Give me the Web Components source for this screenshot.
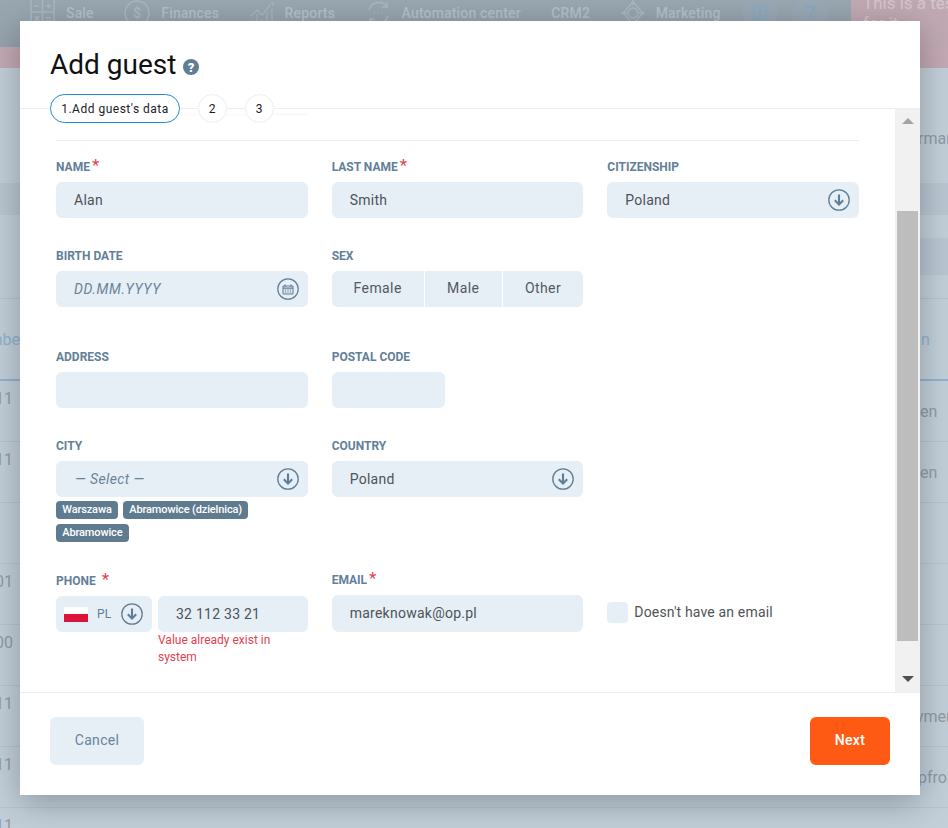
<!DOCTYPE html>
<html lang="en">
<head>
<meta charset="utf-8">
<title>Add guest</title>
<style>
  html, body { margin: 0; height: 100%; }
  body { font-family: Roboto, "Liberation Sans", sans-serif; overflow: hidden; background: #c2cfd9; }
  .row { display: grid; grid-template-columns: repeat(3, 1fr); column-gap: 24px; align-items: start; }
  .tags { display: flex; flex-wrap: wrap; gap: 5px; margin-top: 4px; }
  .phone { display: flex; gap: 6px; align-items: flex-start; }
  .phone x-select { width: 96px; flex: none; }
  .phone > div { flex: 1; min-width: 0; }
  .error { color: #e2434f; font-size: 12px; line-height: 17px; }
  .no-email { padding-top: 30px; }
  .email { margin-top: -1px; }
  .flag { display: block; width: 24px; height: 15px; margin-right: 9px; background: linear-gradient(#fff 50%, #dc143c 50%); }
  .code { color: #5c809a; font-size: 12px; letter-spacing: .3px; }
  .footer { display: flex; justify-content: space-between; }
</style>
</head>
<body>
<x-backdrop></x-backdrop>

<x-modal>
  <span slot="title">Add guest</span>
  <x-stepper slot="stepper" steps="1.Add guest's data,2,3"></x-stepper>

  <div class="row" style="margin-top:0">
    <x-field label="Name" required><x-input value="Alan"></x-input></x-field>
    <x-field label="Last name" required><x-input value="Smith"></x-input></x-field>
    <x-field label="Citizenship"><x-select value="Poland"></x-select></x-field>
  </div>

  <div class="row" style="margin-top:29px">
    <x-field label="Birth date"><x-input placeholder="DD.MM.YYYY" icon="calendar"></x-input></x-field>
    <x-field label="Sex"><x-segment options="Female,Male,Other"></x-segment></x-field>
  </div>

  <div class="row" style="margin-top:41px">
    <x-field label="Address"><x-input></x-input></x-field>
    <x-field label="Postal code"><x-input style="width:113px"></x-input></x-field>
  </div>

  <div class="row" style="margin-top:29px">
    <x-field label="City">
      <x-select placeholder="— Select —"></x-select>
      <div class="tags">
        <x-tag>Warszawa</x-tag>
        <x-tag>Abramowice (dzielnica)</x-tag>
        <x-tag>Abramowice</x-tag>
      </div>
    </x-field>
    <x-field label="Country"><x-select value="Poland"></x-select></x-field>
  </div>

  <div class="row" style="margin-top:30px">
    <x-field label="Phone" required wide-star>
      <div class="phone">
        <x-select compact>
          <i class="flag"></i><span class="code">PL</span>
        </x-select>
        <div>
          <x-input value="32 112 33 21"></x-input>
          <div class="error">Value already exist in system</div>
        </div>
      </div>
    </x-field>
    <x-field class="email" label="Email" required><x-input value="mareknowak@op.pl" underline></x-input></x-field>
    <div class="no-email"><x-checkbox>Doesn't have an email</x-checkbox></div>
  </div>

  <div slot="footer" class="footer">
    <x-button>Cancel</x-button>
    <x-button primary>Next</x-button>
  </div>
</x-modal>

<script>
// Small icons shared by the form controls
const ICONS = {
  arrow: `<svg width="22" height="22" viewBox="0 0 22 22" fill="none"><circle cx="11" cy="11" r="10.2" stroke="#5f7d95" stroke-width="1.3"/><path d="M11 5.5v10M6.8 11.2l4.2 4.4 4.2-4.4" stroke="#5f7d95" stroke-width="2.1"/></svg>`,
  calendar: `<svg width="22" height="22" viewBox="0 0 22 22" fill="none"><circle cx="11" cy="11" r="10.2" stroke="#5f7d95" stroke-width="1.2"/><path d="M6 8h10v8H6z" stroke="#5f7d95"/><path d="M6 10.2h10M8 6.4v2M14 6.4v2" stroke="#5f7d95" stroke-width="1.2"/><path d="M7.8 12h1.4M10.3 12h1.4M12.8 12h1.4M7.8 14h1.4M10.3 14h1.4M12.8 14h1.4" stroke="#5f7d95"/></svg>`,
};

// Page behind the dialog
const NAV = [
  ['Sale', `<svg width="25" height="30" viewBox="0 0 25 30" fill="none" stroke="#aab8c1" stroke-width="1.5"><rect x="1" y="1" width="23" height="26"/><path d="M12.5 1v26M1 14h23M4 8h5M16 8h5M18.5 5.5v5M5 18l4 5M9 18l-4 5M16 20h5M16 23h5"/></svg>`],
  ['Finances', `<svg width="26" height="28" viewBox="0 0 26 28" fill="none" stroke="#aab8c1" stroke-width="1.5"><circle cx="13" cy="14" r="12"/><text x="13" y="19" text-anchor="middle" font-family="Roboto" font-size="14" font-weight="700" fill="#aab8c1" stroke="none">$</text></svg>`],
  ['Reports', `<svg width="24" height="24" viewBox="0 0 24 24" fill="none" stroke="#aab8c1" stroke-width="1.2"><path d="M1 15l6-6 5 5 8-10M20 2h3v3M2 23v-4M7 23V13M12 23v-5M17 23V11M22 23V8"/></svg>`],
  ['Automation center', `<svg width="25" height="28" viewBox="0 0 25 28" fill="none" stroke="#aab8c1" stroke-width="1.5"><path d="M3 11A10 10 0 0 1 21 8M22 17A10 10 0 0 1 4 20M21 3v5h-5M4 25v-5h5"/><path d="M8 14h1M12 14h1M16 14h1"/></svg>`],
  ['CRM2', ''],
  ['Marketing', `<svg width="24" height="28" viewBox="0 0 24 28" fill="none" stroke="#aab8c1" stroke-width="1.5"><circle cx="12" cy="14" r="5"/><path d="M12 3l10 11-10 11L2 14zM12 0v6M12 22v6M0 14h6M18 14h6"/></svg>`],
];

const backdropTemplate = document.createElement('template');
backdropTemplate.innerHTML = /*html*/ `
  <style>
    :host { display: block; height: 828px; overflow: hidden; color: #8f9ba5; background: #c2cfd9; font-size: 16px; }
    nav { display: flex; gap: 30.5px; height: 47px; padding-left: 30px; background: linear-gradient(#99a7b1, #95a3ad); overflow: hidden; }
    .item { display: flex; align-items: center; gap: 11px; height: 26px; color: #b3c1ca; font-size: 14px; font-weight: 500; letter-spacing: .17px; white-space: nowrap; }
    .item svg { flex: none; }
    .round { flex: none; width: 36px; height: 36px; margin-top: -4px; border-radius: 50%; background: #9aa8b5; color: #84a9c8; display: flex; align-items: center; justify-content: center; font-size: 24px; }
    .round.first { margin-left: -9px; margin-right: -17px; }
    .notice { flex: 1; min-width: 0; margin-left: -7px; padding-left: 12px; background: #c0a9b3; color: #d6c6cc; font-size: 17px; line-height: 20px; height: 68px; overflow: hidden; white-space: nowrap; }
    .notice span { display: block; }
    .notice span:first-child { margin-top: -7px; }
    .pink { height: 21px; background: #c3a9b4; }
    .plain { height: 115px; display: flex; justify-content: flex-end; align-items: flex-end; }
    .dark { height: 32px; background: #b9c6d1; }
    .gap { height: 23px; }
    .dark2 { height: 37px; background: linear-gradient(90deg, transparent 50%, #b9c6d1 50%); }
    .gap2 { height: 24px; border-bottom: 1px solid #b5c2cc; box-sizing: border-box; }
    .line { display: flex; justify-content: space-between; align-items: center; height: 61px; box-sizing: border-box; border-bottom: 1px solid #b7c4ce; }
    .line.head { height: 82px; border-bottom: 2px solid #90b3d2; color: #8fb2d2; }
    .l { width: 13px; display: flex; justify-content: flex-end; overflow: hidden; white-space: nowrap; }
    .rows .l { align-self: flex-start; margin-top: 8px; line-height: 20px; }
    .r { overflow: hidden; white-space: nowrap; }
    .l b { font-weight: 400; color: #8ea6c6; }
  </style>
  <nav></nav>
  <div class="pink"></div>
  <div class="plain"><span class="r" style="margin-bottom:35px;width:30px">rman</span></div>
  <div class="dark"></div>
  <div class="gap"></div>
  <div class="dark2"></div>
  <div class="gap2"></div>
  <div class="line head"><span class="l" style="width:20px">Numbe</span><span class="r" style="width:27px">n</span></div>
  <div class="rows"></div>
`;

class XBackdrop extends HTMLElement {
  constructor() {
    super();
    this.attachShadow({ mode: 'open' });
    this.shadowRoot.appendChild(backdropTemplate.content.cloneNode(true));
  }

  connectedCallback() {
    const nav = this.shadowRoot.querySelector('nav');
    nav.innerHTML = NAV.map(([name, icon]) => `<div class="item">${icon}<span>${name}</span></div>`).join('')
      + `<div class="round first"><svg width="20" height="22" viewBox="0 0 20 22" fill="none" stroke="#84a9c8" stroke-width="1.3"><path d="M4 1v20M10 1v20M16 1v20M1 15h6M7 7h6M13 13h6"/></svg></div><div class="round">?</div><div class="notice"><span>This is a test message</span><span>for it</span></div>`;

    const rows = [['<b>2</b>11', 'en', 28], ['<b>2</b>11', 'en', 28], ['', '', 28], ['<b>2</b>01', '', 28], ['<b>2</b>00', '', 28], ['<b>2</b>11', 'ymen', 32], ['<b>2</b>11', 'pfrom', 30], ['<b>2</b>11', '', 28]];
    this.shadowRoot.querySelector('.rows').innerHTML = rows
      .map(([l, r, w]) => `<div class="line"><span class="l">${l}</span><span class="r" style="width:${w}px">${r}</span></div>`)
      .join('');
  }
}
customElements.define('x-backdrop', XBackdrop);

const modalTemplate = document.createElement('template');
modalTemplate.innerHTML = /*html*/ `
  <style>
    :host {
      position: absolute; left: 20px; top: 21px; width: 900px; height: 774px;
      display: flex; flex-direction: column; background: #fff;
      box-shadow: 0 8px 32px rgba(0, 0, 0, .28);
    }
    header { height: 88px; box-sizing: border-box; padding: 27px 30px 0; border-bottom: 1px solid #e6eff6; }
    h1 { display: flex; align-items: center; gap: 7px; margin: 0; height: 34px; font-size: 28px; font-weight: 400; color: #111; line-height: 34px; }
    h1 svg { margin-top: 4px; }
    .stepper { display: block; margin-top: 12px; position: relative; }
    .body { flex: 1; display: flex; min-height: 0; }
    .content { flex: 1; padding: 4px 36px 0 36px; min-width: 0; }
    .shade { width: 251px; height: 3px; background: linear-gradient(90deg, #fff 30%, #f8fafc); }
    .rule { margin: 24px 0 17px; border-top: 1px solid #e6eff6; }
    .bar { flex: none; width: 25px; background: #f1f1f1; display: flex; flex-direction: column; align-items: center; padding-top: 9px; box-sizing: border-box; }
    .up { width: 0; height: 0; border: 6px solid transparent; border-top: 0; border-bottom: 6px solid #a3a3a3; }
    .thumb { width: 21px; height: 430px; margin-top: 87px; background: #bdbdbd; }
    .down { width: 0; height: 0; margin-top: 35px; border: 6px solid transparent; border-bottom: 0; border-top: 6px solid #505050; }
    footer { height: 103px; box-sizing: border-box; border-top: 1px solid #e6eff6; padding: 24px 30px 0; }
  </style>
  <header>
    <h1>
      <slot name="title"></slot>
      <svg width="16" height="16" viewBox="0 0 16 16"><circle cx="8" cy="8" r="8" fill="#5f7d95"/><text x="8" y="12.6" text-anchor="middle" font-family="Roboto" font-size="13" font-weight="900" fill="#fff">?</text></svg>
    </h1>
    <div class="stepper"><slot name="stepper"></slot></div>
  </header>
  <div class="body">
    <div class="content">
      <div class="shade"></div>
      <div class="rule"></div>
      <slot></slot>
    </div>
    <div class="bar"><i class="up"></i><i class="thumb"></i><i class="down"></i></div>
  </div>
  <footer><slot name="footer"></slot></footer>
`;

class XModal extends HTMLElement {
  constructor() {
    super();
    this.attachShadow({ mode: 'open' });
    this.shadowRoot.appendChild(modalTemplate.content.cloneNode(true));
  }
}
customElements.define('x-modal', XModal);

class XStepper extends HTMLElement {
  constructor() {
    super();
    this.attachShadow({ mode: 'open' });
  }

  connectedCallback() {
    const steps = this.getAttribute('steps').split(',');
    this.shadowRoot.innerHTML = /*html*/ `
      <style>
        :host { display: flex; gap: 17.5px; height: 29px; font-size: 12px; letter-spacing: .5px; color: #1d1d1d; }
        span { box-sizing: border-box; height: 29px; width: 29.5px; display: flex; align-items: center; justify-content: center; background: #fff; border: 1px solid #e6eff6; border-radius: 15px; }
        .on { width: 130px; border-color: #1a8fd6; }
      </style>
      ${steps.map((s, i) => `<span class="${i ? '' : 'on'}">${s}</span>`).join('')}
    `;
  }
}
customElements.define('x-stepper', XStepper);

class XField extends HTMLElement {
  constructor() {
    super();
    this.attachShadow({ mode: 'open' });
  }

  connectedCallback() {
    const star = this.hasAttribute('required')
      ? `<b style="margin-left:${this.hasAttribute('wide-star') ? 6 : 2}px">*</b>`
      : '';
    this.shadowRoot.innerHTML = /*html*/ `
      <style>
        :host { display: block; }
        label { display: flex; height: 24px; line-height: 18px; font-size: 12px; font-weight: 700; color: #62809a; text-transform: uppercase; }
        b { color: #e2434f; font-size: 17px; font-weight: 400; line-height: 14px; }
      </style>
      <label>${this.getAttribute('label')}${star}</label>
      <slot></slot>
    `;
  }
}
customElements.define('x-field', XField);

class XInput extends HTMLElement {
  constructor() {
    super();
    this.attachShadow({ mode: 'open' });
  }

  connectedCallback() {
    const value = this.getAttribute('value') || '';
    const placeholder = this.getAttribute('placeholder') || '';
    const icon = ICONS[this.getAttribute('icon')] || '';
    this.shadowRoot.innerHTML = /*html*/ `
      <style>
        :host { display: flex; align-items: center; justify-content: space-between; box-sizing: border-box; height: 36px; padding: 0 9px 0 18px; background: #e6eef6; border-radius: 6px; font-size: 14px; letter-spacing: .25px; color: #4f5358; }
        :host([underline]) { box-shadow: 0 2px 0 -1px #e9f0f6; }
        em { color: #6a8399; letter-spacing: .6px; }
        svg { display: block; }
      </style>
      <span>${value}${placeholder ? `<em>${placeholder}</em>` : ''}</span>${icon}
    `;
  }
}
customElements.define('x-input', XInput);

class XSelect extends HTMLElement {
  constructor() {
    super();
    this.attachShadow({ mode: 'open' });
  }

  connectedCallback() {
    const value = this.getAttribute('value') || '';
    const placeholder = this.getAttribute('placeholder') || '';
    this.shadowRoot.innerHTML = /*html*/ `
      <style>
        :host { display: flex; align-items: center; box-sizing: border-box; height: 36px; padding: 0 9px 0 18px; background: #e6eef6; border-radius: 6px; font-size: 14px; letter-spacing: .25px; color: #4f5358; }
        :host([compact]) { padding-left: 8px; }
        em { color: #6a8399; letter-spacing: .4px; margin-left: 1px; }
        .grow { flex: 1; display: flex; align-items: center; }
        svg { display: block; flex: none; }
      </style>
      <div class="grow">${value}${placeholder ? `<em>${placeholder}</em>` : ''}<slot></slot></div>${ICONS.arrow}
    `;
  }
}
customElements.define('x-select', XSelect);

class XSegment extends HTMLElement {
  constructor() {
    super();
    this.attachShadow({ mode: 'open' });
  }

  connectedCallback() {
    const widths = ['92px', '77px', '1fr'];
    this.shadowRoot.innerHTML = /*html*/ `
      <style>
        :host { display: grid; grid-template-columns: ${widths.join(' ')}; column-gap: 1px; height: 36px; border-radius: 6px; overflow: hidden; font-size: 14px; letter-spacing: .4px; color: #55595e; }
        span { display: flex; align-items: center; justify-content: center; background: #e6eef6; padding-bottom: 2px; }
      </style>
      ${this.getAttribute('options').split(',').map(o => `<span>${o}</span>`).join('')}
    `;
  }
}
customElements.define('x-segment', XSegment);

const tagTemplate = document.createElement('template');
tagTemplate.innerHTML = /*html*/ `
  <style>
    :host { display: block; height: 18px; padding: 0 6.3px; background: #5f7b90; border-radius: 4px; color: #fff; font-size: 11px; font-weight: 500; letter-spacing: -.14px; line-height: 18px; }
  </style>
  <slot></slot>
`;

class XTag extends HTMLElement {
  constructor() {
    super();
    this.attachShadow({ mode: 'open' });
    this.shadowRoot.appendChild(tagTemplate.content.cloneNode(true));
  }
}
customElements.define('x-tag', XTag);

const checkboxTemplate = document.createElement('template');
checkboxTemplate.innerHTML = /*html*/ `
  <style>
    :host { display: flex; align-items: center; gap: 6px; font-size: 14px; letter-spacing: .16px; color: #4f5358; }
    i { display: block; width: 21px; height: 21px; background: #e6eef6; border-radius: 4px; }
    span { margin-top: -2px; }
  </style>
  <i></i><span><slot></slot></span>
`;

class XCheckbox extends HTMLElement {
  constructor() {
    super();
    this.attachShadow({ mode: 'open' });
    this.shadowRoot.appendChild(checkboxTemplate.content.cloneNode(true));
  }
}
customElements.define('x-checkbox', XCheckbox);

const buttonTemplate = document.createElement('template');
buttonTemplate.innerHTML = /*html*/ `
  <style>
    :host { display: flex; align-items: center; justify-content: center; box-sizing: border-box; width: 94px; height: 48px; padding-bottom: 2px; background: #e6eef6; border-radius: 6px; color: #6b8499; font-size: 14px; letter-spacing: .3px; }
    :host([primary]) { width: 80px; background: #ff5a14; color: #fff; font-weight: 500; }
  </style>
  <slot></slot>
`;

class XButton extends HTMLElement {
  constructor() {
    super();
    this.attachShadow({ mode: 'open' });
    this.shadowRoot.appendChild(buttonTemplate.content.cloneNode(true));
  }
}
customElements.define('x-button', XButton);
</script>
</body>
</html>
